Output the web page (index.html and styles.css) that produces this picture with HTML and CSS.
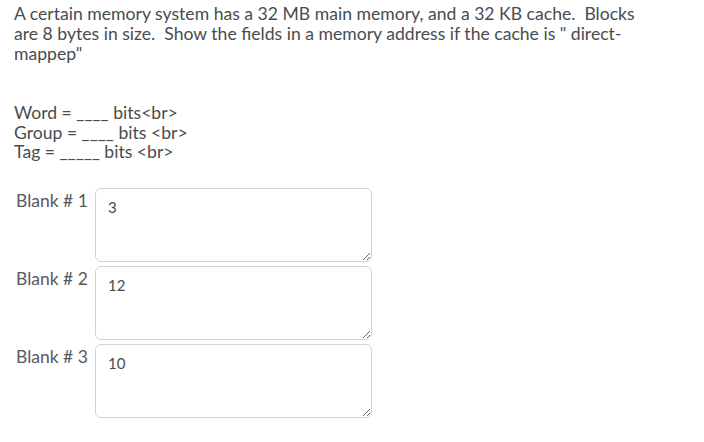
FILE: index.html
```html
<!DOCTYPE html>
<html lang="en">
<head>
    <meta charset="UTF-8">
    <title>Question</title>
    <link rel="stylesheet" href="styles.css">
</head>
<body>
    <div class="question">
        <p class="prompt">A certain memory system has a 32 MB main memory, and a 32 KB cache.&nbsp; Blocks are 8 bytes in size.&nbsp; Show the fields in a memory address if the cache is " direct-mappep"</p>

        <p class="fields">Word = ____ bits&lt;br&gt;<br>Group = ____ bits &lt;br&gt;<br>Tag = _____ bits &lt;br&gt;</p>

        <div class="blanks">
            <div class="blank">
                <label for="b1">Blank # 1</label>
                <textarea id="b1">3</textarea>
            </div>
            <div class="blank">
                <label for="b2">Blank # 2</label>
                <textarea id="b2">12</textarea>
            </div>
            <div class="blank">
                <label for="b3">Blank # 3</label>
                <textarea id="b3">10</textarea>
            </div>
        </div>
    </div>
</body>
</html>
```

FILE: styles.css
```css
body {
    margin: 0;
    background: #ffffff;
    font-family: Lato, 'Open Sans', sans-serif;
    color: #494c4e;
}

.question {
    padding: 4px 14px 0 14px;
    width: 630px;
}

.prompt {
    margin: 0;
    font-size: 17.6px;
    line-height: 20px;
}

.fields {
    margin: 39px 0 0 0;
    font-size: 17.6px;
    line-height: 19.5px;
}

.blanks {
    margin-top: 26px;
    display: flex;
    flex-direction: column;
    gap: 4px;
}

.blank {
    display: flex;
    gap: 5px;
}

.blank label {
    width: 74px;
    padding: 2px 0 0 2px;
    font-size: 17.5px;
    color: #565a5c;
}

.blank textarea {
    width: 277px;
    height: 74px;
    box-sizing: border-box;
    margin: 0;
    padding: 9px 12px;
    border: 1px solid #cdd5dc;
    border-radius: 6px;
    font-family: Lato, sans-serif;
    font-size: 15px;
    color: #494c4e;
    resize: vertical;
}
```
